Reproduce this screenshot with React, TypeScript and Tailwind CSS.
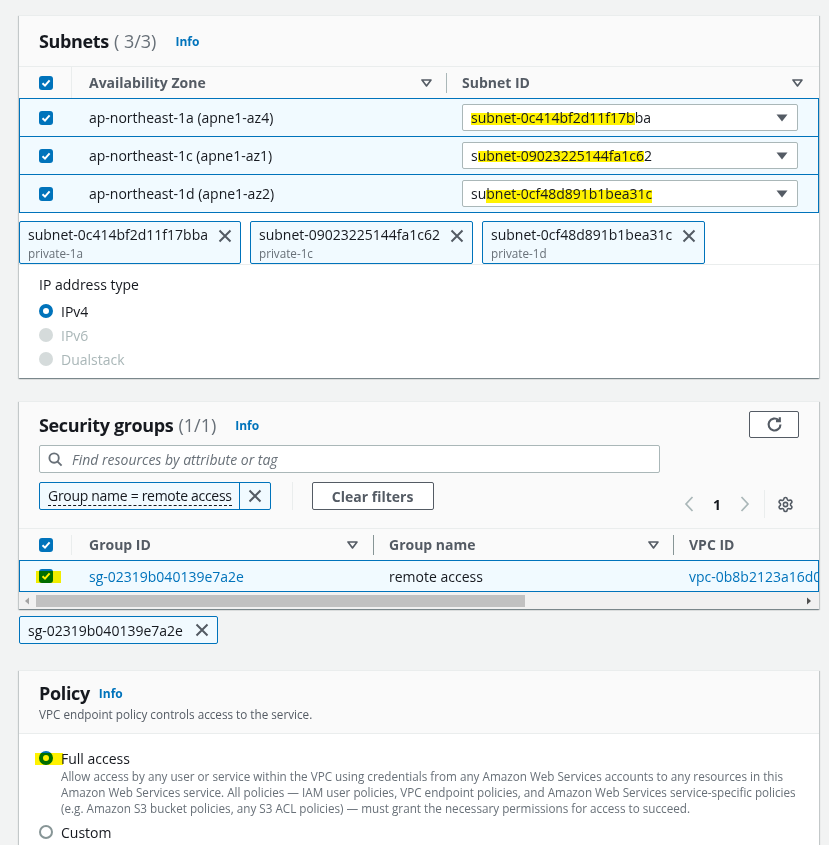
import React from "react";
import { Settings } from "lucide-react";

const panel =
  "border-t border-[#eaeded] shadow-[0_1px_1px_0_rgba(0,28,36,0.3),1px_1px_1px_0_rgba(0,28,36,0.15),-1px_1px_1px_0_rgba(0,28,36,0.15)]";

function Check() {
  return (
    <span className="flex h-[14px] w-[14px] items-center justify-center rounded-[3px] bg-[#0073bb]">
      <svg width="10" height="10" viewBox="0 0 10 10">
        <polyline points="1.5,5.2 4,7.6 8.6,2.4" fill="none" stroke="white" strokeWidth="2" />
      </svg>
    </span>
  );
}

function SortCaret() {
  return (
    <svg width="11" height="8" viewBox="0 0 11 8">
      <path d="M1 1 H10 L5.5 7 Z" fill="none" stroke="#545b64" strokeWidth="1.6" strokeLinejoin="round" />
    </svg>
  );
}

function XIcon({ className = "" }: { className?: string }) {
  return (
    <svg className={className} width="14" height="14" viewBox="0 0 14 14">
      <path d="M1.5 1.5 L12.5 12.5 M12.5 1.5 L1.5 12.5" stroke="#545b64" strokeWidth="2" />
    </svg>
  );
}

function SelectCaret() {
  return (
    <svg width="12" height="8" viewBox="0 0 12 8">
      <path d="M0.5 0.5 H11.5 L6 7.5 Z" fill="#545b64" />
    </svg>
  );
}

const hl = "bg-no-repeat [background-image:linear-gradient(#fff200,#fff200)]";

const subnetRows = [
  {
    az: "ap-northeast-1a (apne1-az4)",
    pre: "",
    mark: "subnet-0c414bf2d11f17b",
    post: "ba",
    cls: hl + " [background-size:100%_12px] [background-position:0_5px]",
  },
  {
    az: "ap-northeast-1c (apne1-az1)",
    pre: "s",
    mark: "ubnet-09023225144fa1c6",
    post: "2",
    cls: hl + " [background-size:100%_11px] [background-position:0_5px]",
  },
  {
    az: "ap-northeast-1d (apne1-az2)",
    pre: "su",
    mark: "bnet-0cf48d891b1bea31c",
    post: "",
    cls: hl + " [background-size:100%_14px] [background-position:0_6px]",
  },
];

const tokens = [
  { id: "subnet-0c414bf2d11f17bba", name: "private-1a" },
  { id: "subnet-09023225144fa1c62", name: "private-1c" },
  { id: "subnet-0cf48d891b1bea31c", name: "private-1d" },
];

function Radio({ state }: { state: "on" | "off" | "disabled" }) {
  if (state === "on")
    return <span className="block h-[14px] w-[14px] shrink-0 rounded-full border-[4px] border-[#0073bb] bg-white" />;
  if (state === "disabled")
    return <span className="block h-[14px] w-[14px] shrink-0 rounded-full bg-[#d5dbdb]" />;
  return <span className="block h-[14px] w-[14px] shrink-0 rounded-full border-2 border-[#879596] bg-white" />;
}

export default function App() {
  return (
    <div className="min-h-[845px] w-full overflow-hidden bg-[#f2f3f3] pl-[19px] pt-[15px] font-['Open_Sans',sans-serif] text-[14px] text-[#16191f]">
      <div className="flex w-[800px] flex-col">
        {/* Subnets panel */}
        <div className={panel + " bg-white"}>
          <div className="flex h-[50px] items-center bg-[#fafafa] px-[20px]">
            <span className="text-[18px] font-bold leading-[24px] tracking-[-0.35px] text-[#16191f]">Subnets</span>
            <span className="ml-[5px] text-[18px] leading-[24px] text-[#687078]">( 3/3)</span>
            <span className="ml-[19px] mt-[2px] text-[12px] font-bold text-[#0073bb]">Info</span>
          </div>
          <div className="grid h-[32px] grid-cols-[53px_374px_373px] items-center border-t border-[#eaeded] bg-[#fafafa]">
            <div className="flex h-full items-center border-r border-[#eaeded] pl-[20px]">
              <Check />
            </div>
            <div className="flex items-center justify-between pl-[17px] pr-[14px] font-bold text-[#545b64]">
              <span>Availability Zone</span>
              <SortCaret />
            </div>
            <div className="flex h-[20px] items-center justify-between border-l border-[#aab7b8] pl-[15px] pr-[16px] font-bold text-[#545b64]">
              <span>Subnet ID</span>
              <SortCaret />
            </div>
          </div>
          {subnetRows.map((r, i) => (
            <div
              key={r.az}
              className={
                i === 2
                  ? "grid h-[39px] grid-cols-[52px_374px_372px] items-center border border-[#0073bb] bg-[#f1faff]"
                  : "grid h-[38px] grid-cols-[52px_374px_372px] items-center border-x border-t border-[#0073bb] bg-[#f1faff]"
              }
            >
              <div className="pl-[19px]">
                <Check />
              </div>
              <div className="pl-[17px] text-[#16191f]">{r.az}</div>
              <div className="pl-[16px] pr-[20px]">
                <div className="flex h-[27px] items-center justify-between rounded-[2px] border border-[#aab7b8] bg-white pl-[8px] pr-[9px]">
                  <span className="whitespace-nowrap leading-[19px]">
                    {r.pre}
                    <span className={r.cls}>{r.mark}</span>
                    {r.post}
                  </span>
                  <SelectCaret />
                </div>
              </div>
            </div>
          ))}
          <div className="flex gap-[9px] border-b border-[#eaeded] pt-[8px]">
            {tokens.map((t) => (
              <div
                key={t.id}
                className="flex h-[43px] items-start rounded-[2px] border border-[#0073bb] bg-[#f1faff] pl-[8px] pr-[8px] pt-[3px]"
              >
                <div className="flex flex-col">
                  <span className="text-[14px] leading-[20px] text-[#16191f]">{t.id}</span>
                  <span className="text-[11.7px] leading-[16px] text-[#687078]">{t.name}</span>
                </div>
                <XIcon className="ml-[10px] mt-[4px]" />
              </div>
            ))}
          </div>
          <div className="flex flex-col px-[20px] pb-[7px] pt-[10px]">
            <span className="leading-[20px] text-[#16191f]">IP address type</span>
            <div className="mt-[4px] flex h-[24px] items-center gap-[8px]">
              <Radio state="on" />
              <span>IPv4</span>
            </div>
            <div className="flex h-[24px] items-center gap-[8px]">
              <Radio state="disabled" />
              <span className="text-[#aab7b8]">IPv6</span>
            </div>
            <div className="flex h-[24px] items-center gap-[8px]">
              <Radio state="disabled" />
              <span className="text-[#aab7b8]">Dualstack</span>
            </div>
          </div>
        </div>

        {/* Security groups panel */}
        <div className={panel + " mt-[23px] bg-[#fafafa]"}>
          <div className="px-[20px] pt-[9px]">
            <div className="flex h-[27px] items-center">
              <span className="text-[18px] font-bold leading-[24px] tracking-[-0.35px]">Security groups</span>
              <span className="ml-[5px] text-[18px] leading-[24px] text-[#687078]">(1/1)</span>
              <span className="ml-[19px] mt-[2px] text-[12px] font-bold text-[#0073bb]">Info</span>
              <button className="ml-auto flex h-[27px] w-[50px] items-center justify-center rounded-[2px] border border-[#545b64] bg-white">
                <svg width="17" height="17" viewBox="0 0 16 16">
                  <path d="M13.6 8 A5.6 5.6 0 1 1 11.8 3.9" fill="none" stroke="#545b64" strokeWidth="2" />
                  <polyline points="13,1.2 13,4.8 9.4,4.8" fill="none" stroke="#545b64" strokeWidth="2" />
                </svg>
              </button>
            </div>
            <div className="mt-[7px] flex h-[28px] w-[621px] items-center rounded-[2px] border border-[#aab7b8] bg-white pl-[8px]">
              <svg width="15" height="15" viewBox="0 0 16 16">
                <circle cx="6.5" cy="6.5" r="5" fill="none" stroke="#687078" strokeWidth="2" />
                <path d="M10.2 10.2 L14.5 14.5" stroke="#687078" strokeWidth="2" />
              </svg>
              <span className="ml-[9px] italic text-[#687078]">Find resources by attribute or tag</span>
            </div>
            <div className="mt-[9px] flex items-start pb-[10px]">
              <div className="flex h-[28px] items-stretch rounded-[2px] border border-[#0073bb] bg-[#f1faff]">
                <span className="flex items-center pl-[8px] pr-[7px]">
                  <span className="border-b border-dashed border-[#16191f] leading-[18px] tracking-[-0.3px]">Group name = remote access</span>
                </span>
                <span className="flex w-[31px] items-center justify-center border-l border-[#0073bb]">
                  <XIcon />
                </span>
              </div>
              <span className="ml-[21px] h-[28px] w-px bg-[#eaeded]" />
              <button className="ml-[19px] flex h-[28px] w-[122px] items-center justify-center rounded-[2px] border border-[#545b64] bg-white font-bold text-[#545b64]">
                Clear filters
              </button>
              <div className="ml-auto mt-[8px] flex h-[28px] items-center">
                <svg width="10" height="16" viewBox="0 0 10 16">
                  <polyline points="8.5,1 2,8 8.5,15" fill="none" stroke="#aab7b8" strokeWidth="1.7" />
                </svg>
                <span className="ml-[19px] font-bold text-[#16191f]">1</span>
                <svg className="ml-[19px]" width="10" height="16" viewBox="0 0 10 16">
                  <polyline points="1.5,1 8,8 1.5,15" fill="none" stroke="#aab7b8" strokeWidth="1.7" />
                </svg>
                <span className="ml-[14px] h-[28px] w-px bg-[#eaeded]" />
                <Settings className="ml-[12px] mr-[5px]" size={17} color="#545b64" strokeWidth={2.2} />
              </div>
            </div>
          </div>
          <div className="grid h-[32px] grid-cols-[53px_301px_300px_146px] items-center border-t border-[#eaeded]">
            <div className="flex h-[20px] items-center border-r border-[#eaeded] pl-[20px]">
              <Check />
            </div>
            <div className="flex h-[20px] items-center justify-between pl-[17px] pr-[15px] font-bold text-[#545b64]">
              <span>Group ID</span>
              <SortCaret />
            </div>
            <div className="flex h-[20px] items-center justify-between border-l border-[#879596] pl-[15px] pr-[14px] font-bold text-[#545b64]">
              <span>Group name</span>
              <SortCaret />
            </div>
            <div className="flex h-[20px] items-center border-l border-[#879596] pl-[15px] font-bold text-[#545b64]">
              <span>VPC ID</span>
            </div>
          </div>
          <div className="grid h-[32px] grid-cols-[52px_301px_300px_145px] items-center overflow-hidden border border-[#0073bb] bg-[#f1faff]">
            <div className="relative pl-[19px]">
              <Check />
              <span className="absolute left-[16px] top-[2px] h-[12px] w-[25px] bg-[#fff200] mix-blend-multiply" />
            </div>
            <div className="pl-[17px] text-[#0073bb]">sg-02319b040139e7a2e</div>
            <div className="pl-[16px]">remote access</div>
            <div className="overflow-hidden whitespace-nowrap pl-[16px] text-[#0073bb]">vpc-0b8b2123a16d0c4e</div>
          </div>
          <div className="flex h-[17px] items-center bg-[#f1f1f1]">
            <svg className="ml-[5px]" width="6" height="8" viewBox="0 0 6 8">
              <path d="M5 0.5 V7.5 L1 4 Z" fill="#a3a3a3" />
            </svg>
            <span className="ml-[6px] h-[12px] w-[489px] bg-[#c1c1c1]" />
            <svg className="ml-auto mr-[7px]" width="6" height="8" viewBox="0 0 6 8">
              <path d="M1 0.5 V7.5 L5 4 Z" fill="#505050" />
            </svg>
          </div>
        </div>

        {/* selected SG token */}
        <div className="mt-[7px] flex h-[28px] w-[199px] items-center rounded-[2px] border border-[#0073bb] bg-[#f1faff] pl-[8px] pr-[8px]">
          <span>sg-02319b040139e7a2e</span>
          <XIcon className="ml-auto" />
        </div>

        {/* Policy panel */}
        <div className={panel + " mt-[26px] bg-white"}>
          <div className="flex h-[63px] flex-col border-b border-[#eaeded] bg-[#fafafa] px-[20px] pt-[9px]">
            <div className="flex h-[26px] items-center">
              <span className="text-[18px] font-bold leading-[24px] tracking-[-0.35px]">Policy</span>
              <span className="ml-[9px] mt-[2px] text-[12px] font-bold text-[#0073bb]">Info</span>
            </div>
            <span className="text-[11.7px] leading-[16px] text-[#545b64]">VPC endpoint policy controls access to the service.</span>
          </div>
          <div className="flex flex-col px-[20px] pb-[8px] pt-[14px]">
            <div className="flex h-[20px] items-center gap-[8px]">
              <span className="relative">
                <Radio state="on" />
                <span className="absolute left-[-4px] top-[2px] h-[12px] w-[28px] bg-[#fff200] mix-blend-multiply" />
              </span>
              <span>Full access</span>
            </div>
            <p className="whitespace-nowrap pl-[22px] text-[11.7px] leading-[16px] text-[#687078]">
              Allow access by any user or service within the VPC using credentials from any Amazon Web Services accounts to any resources in this
              <br />
              Amazon Web Services service. All policies — IAM user policies, VPC endpoint policies, and Amazon Web Services service-specific policies
              <br />
              (e.g. Amazon S3 bucket policies, any S3 ACL policies) — must grant the necessary permissions for access to succeed.
            </p>
            <div className="mt-[4px] flex h-[24px] items-center gap-[8px]">
              <Radio state="off" />
              <span>Custom</span>
            </div>
          </div>
        </div>
      </div>
    </div>
  );
}
